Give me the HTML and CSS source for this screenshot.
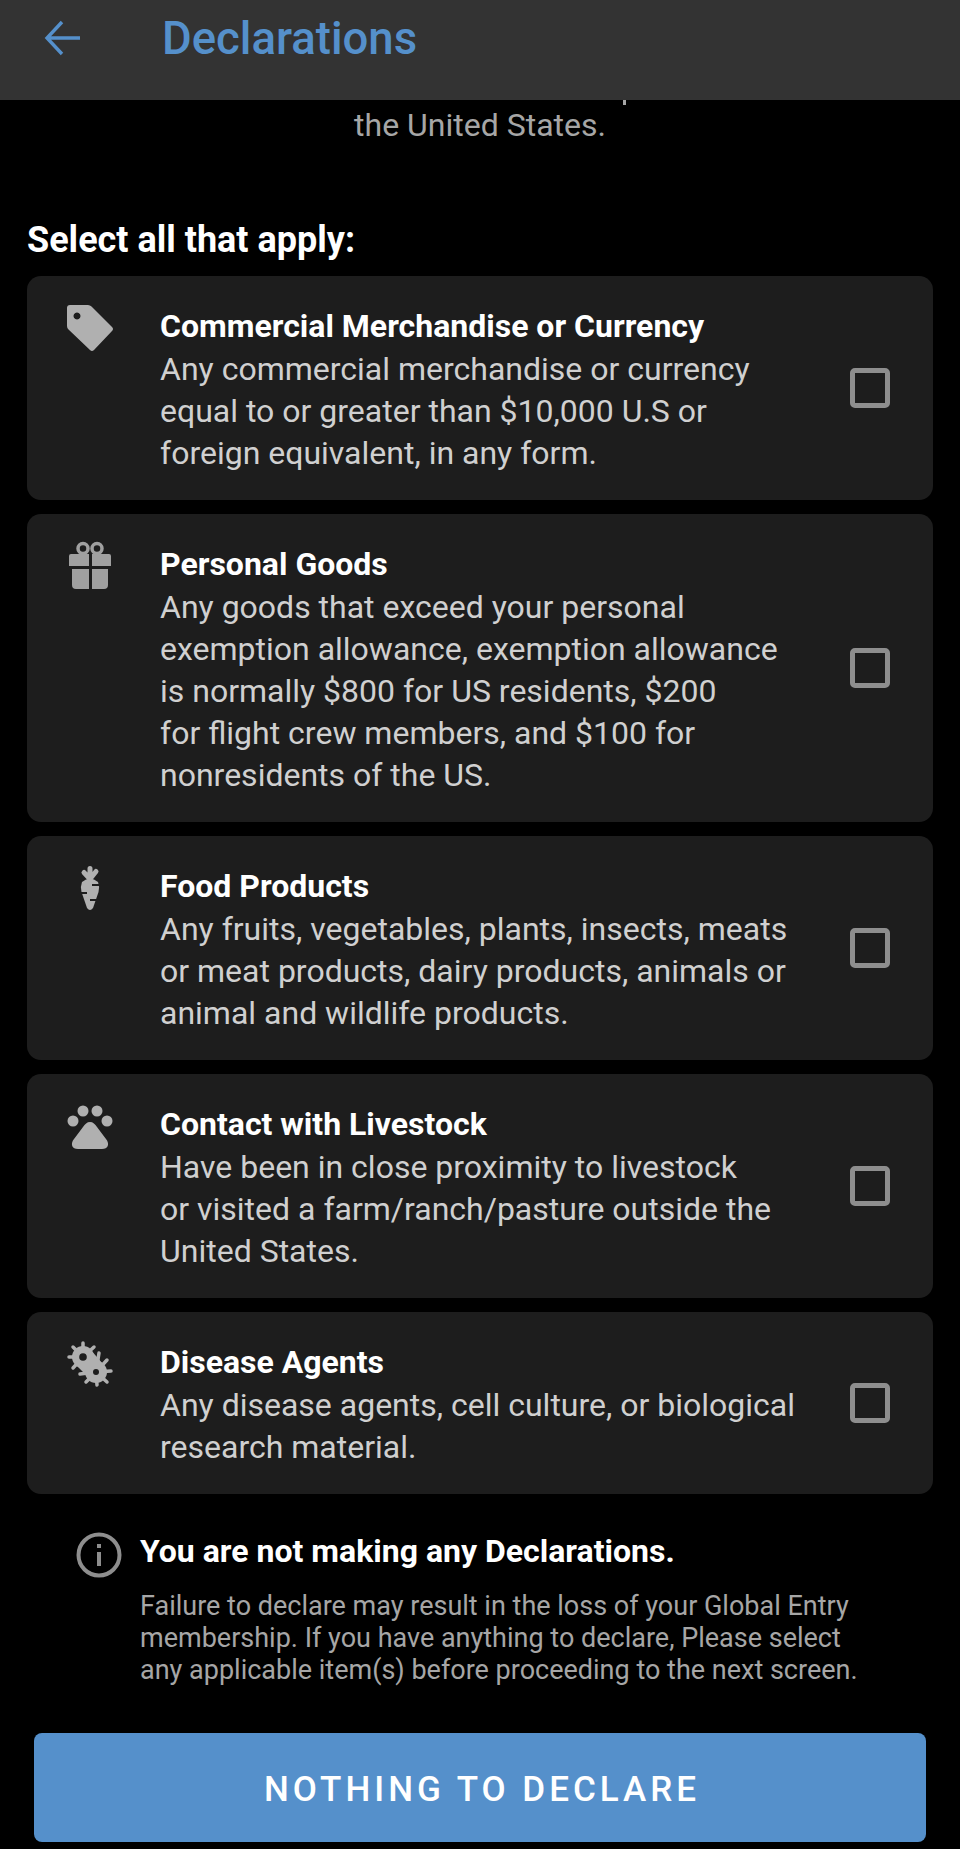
FILE: index.html
```html
<!DOCTYPE html>
<html lang="en">
<head>
    <meta charset="UTF-8">
    <meta name="viewport" content="width=device-width, initial-scale=1.0">
    <title>Declarations</title>
    <link rel="stylesheet" href="styles.css">
</head>
<body>

    <!-- Top bar -->
    <div class="topbar">
        <svg class="back-icon" viewBox="0 0 38 38" width="38" height="38">
            <path d="M36 19H3M18 3L3 19l15 16" fill="none" stroke="#5590cb" stroke-width="3.4"/>
        </svg>
        <h1>Declarations</h1>
    </div>

    <div class="content">
        <p class="intro">the United States.</p>

        <h2>Select all that apply:</h2>

        <div class="card">
            <div class="card-icon">
                <svg viewBox="0 0 46 46" width="46" height="46">
                    <path fill-rule="evenodd" fill="#b0b0b0" d="M3 0H21q2 0 3.500 1.500L45 22q2 2 0 4L27 45q-2 2-4 0L1.500 24.500Q0 23 0 21V3Q0 0 3 0ZM10 7.500a3.500 3.500 0 1 0 .01 0Z"/>
                </svg>
            </div>
            <div class="card-text">
                <h3>Commercial Merchandise or Currency</h3>
                <p>Any commercial merchandise or currency<br>equal to or greater than $10,000 U.S or<br>foreign equivalent, in any form.</p>
            </div>
            <div class="checkbox"></div>
        </div>

        <div class="card">
            <div class="card-icon">
                <svg viewBox="0 0 46 46" width="46" height="46">
                    <circle cx="16" cy="5.500" r="5" fill="none" stroke="#a0a0a0" stroke-width="3.500"/>
                    <circle cx="30" cy="5.500" r="5" fill="none" stroke="#a0a0a0" stroke-width="3.500"/>
                    <path fill="#a0a0a0" d="M4 11H22V23H2V13Q2 11 4 11ZM25 11H42Q44 11 44 13V23H25ZM5 26H22V46H9Q5 46 5 42ZM25 26H41V42Q41 46 37 46H25Z"/>
                </svg>
            </div>
            <div class="card-text">
                <h3>Personal Goods</h3>
                <p>Any goods that exceed your personal<br>exemption allowance, exemption allowance<br>is normally $800 for US residents, $200<br>for flight crew members, and $100 for<br>nonresidents of the US.</p>
            </div>
            <div class="checkbox"></div>
        </div>

        <div class="card">
            <div class="card-icon">
                <svg viewBox="0 0 46 46" width="46" height="46">
                    <path d="M23 14V3.500M23 14L17 7.500M23 14L29 6.500" stroke="#b0b0b0" stroke-width="5" stroke-linecap="round"/>
                    <path fill="#b0b0b0" d="M15 17Q23 10 31 17Q33 22 31.500 27L26 43Q23 47 20 43L14.500 27Q13 22 15 17Z"/>
                    <path d="M25 20H34M13 28H20M23 35H30" stroke="#1d1d1d" stroke-width="2"/>
                </svg>
            </div>
            <div class="card-text">
                <h3>Food Products</h3>
                <p>Any fruits, vegetables, plants, insects, meats<br>or meat products, dairy products, animals or<br>animal and wildlife products.</p>
            </div>
            <div class="checkbox"></div>
        </div>

        <div class="card">
            <div class="card-icon">
                <svg viewBox="0 0 46 46" width="46" height="46">
                    <g fill="#b0b0b0">
                        <circle cx="6" cy="18" r="5.500"/>
                        <circle cx="16" cy="8" r="5.500"/>
                        <circle cx="30" cy="8" r="5.500"/>
                        <circle cx="40" cy="18" r="5.500"/>
                        <path d="M23 19c3 0 5 2 7 5l9 12c4 5 2 10-4 10H11c-6 0-8-5-4-10l9-12c2-3 4-5 7-5Z"/>
                    </g>
                </svg>
            </div>
            <div class="card-text">
                <h3>Contact with Livestock</h3>
                <p>Have been in close proximity to livestock<br>or visited a farm/ranch/pasture outside the<br>United States.</p>
            </div>
            <div class="checkbox"></div>
        </div>

        <div class="card">
            <div class="card-icon">
                <svg viewBox="0 0 46 46" width="46" height="46">
                    <path stroke="#b0b0b0" stroke-width="3.500" stroke-linecap="round" d="M16 16L16 2M16 16L6 6M16 16L2 16M16 16L6 27M16 16L27 6M29 31L13 33M29 31L19 41M29 31L30 44M29 31L40 41M29 31L44 30M29 31L40 19M29 31L32 12"/>
                    <circle cx="16" cy="16" r="11" fill="#b0b0b0"/>
                    <circle cx="29" cy="31" r="11" fill="#b0b0b0"/>
                    <path d="M9 24L22 37 36 23 23 8Z" fill="#b0b0b0"/>
                    <circle cx="16" cy="16" r="3.800" fill="#1d1d1d"/>
                    <circle cx="29" cy="31" r="3" fill="#1d1d1d"/>
                </svg>
            </div>
            <div class="card-text">
                <h3>Disease Agents</h3>
                <p>Any disease agents, cell culture, or biological<br>research material.</p>
            </div>
            <div class="checkbox"></div>
        </div>

        <!-- Notice -->
        <div class="notice">
            <svg class="info-icon" viewBox="0 0 46 46" width="46" height="46">
                <circle cx="23" cy="23" r="20.500" fill="none" stroke="#8e8e8e" stroke-width="4"/>
                <rect x="21" y="20" width="4" height="14" fill="#8e8e8e"/>
                <rect x="21" y="12" width="4" height="4" fill="#8e8e8e"/>
            </svg>
            <div>
                <h4>You are not making any Declarations.</h4>
                <p>Failure to declare may result in the loss of your Global Entry<br>membership. If you have anything to declare, Please select<br>any applicable item(s) before proceeding to the next screen.</p>
            </div>
        </div>

        <button class="declare-btn">NOTHING TO DECLARE</button>
    </div>

</body>
</html>
```

FILE: styles.css
```css
html, body {
    height: 100%;
}

body {
    margin: 0;
    background-color: #000;
    color: #fff;
    font-family: Roboto, sans-serif;
    overflow: hidden;
}

.topbar {
    display: flex;
    align-items: center;
    height: 100px;
    padding: 0 0 24px 44px;
    box-sizing: border-box;
    background-color: #333;
}

.topbar h1 {
    margin: 0 0 0 80px;
    font-size: 45.5px;
    font-weight: 500;
    color: #5590cb;
}

.back-icon {
    flex: none;
}

.content {
    padding: 0 27px;
}

.intro {
    position: relative;
    margin: 4px 0 0;
    font-size: 32px;
    line-height: 42px;
    text-align: center;
    color: #a6a6a6;
}

/* tail of the line scrolled under the top bar */
.intro::before {
    content: "";
    position: absolute;
    left: 596px;
    top: -4px;
    width: 3px;
    height: 5px;
    background-color: #a6a6a6;
}

h2 {
    margin: 72px 0 14px;
    font-size: 36px;
    line-height: 44px;
    font-weight: 700;
}

.card {
    display: flex;
    align-items: center;
    margin-bottom: 14px;
    padding: 29px 0 26px;
    background-color: #1d1d1d;
    border-radius: 14px;
}

.card-icon {
    flex: none;
    align-self: flex-start;
    width: 133px;
}

.card-icon svg {
    display: block;
    margin-left: 40px;
    overflow: visible;
}

.card-text {
    flex: 1;
}

.card-text h3 {
    margin: 0 0 1px;
    font-size: 32px;
    line-height: 42px;
    font-weight: 700;
}

.card-text p {
    margin: 0;
    font-size: 32px;
    line-height: 42px;
    color: #d0d0d0;
}

.checkbox {
    flex: none;
    width: 40px;
    height: 40px;
    margin: -3px 43px 0 0;
    border: 5px solid #8e8e8e;
    border-radius: 5px;
    box-sizing: border-box;
}

.notice {
    display: flex;
    margin: 38px 0 0 49px;
}

.info-icon {
    flex: none;
    margin-right: 18px;
}

.notice h4 {
    margin: -1px 0 0;
    font-size: 32px;
    line-height: 40px;
    font-weight: 700;
}

.notice p {
    margin: 19px 0 0;
    font-size: 27px;
    line-height: 32px;
    color: #a6a6a6;
}

.declare-btn {
    display: block;
    width: 892px;
    height: 109px;
    margin: 47px 0 0 7px;
    padding: 4px 0 0 4px;
    background-color: #5590cb;
    border: none;
    border-radius: 8px;
    color: #fff;
    font-family: Roboto, sans-serif;
    font-size: 35px;
    font-weight: 500;
    letter-spacing: 4px;
}
```
